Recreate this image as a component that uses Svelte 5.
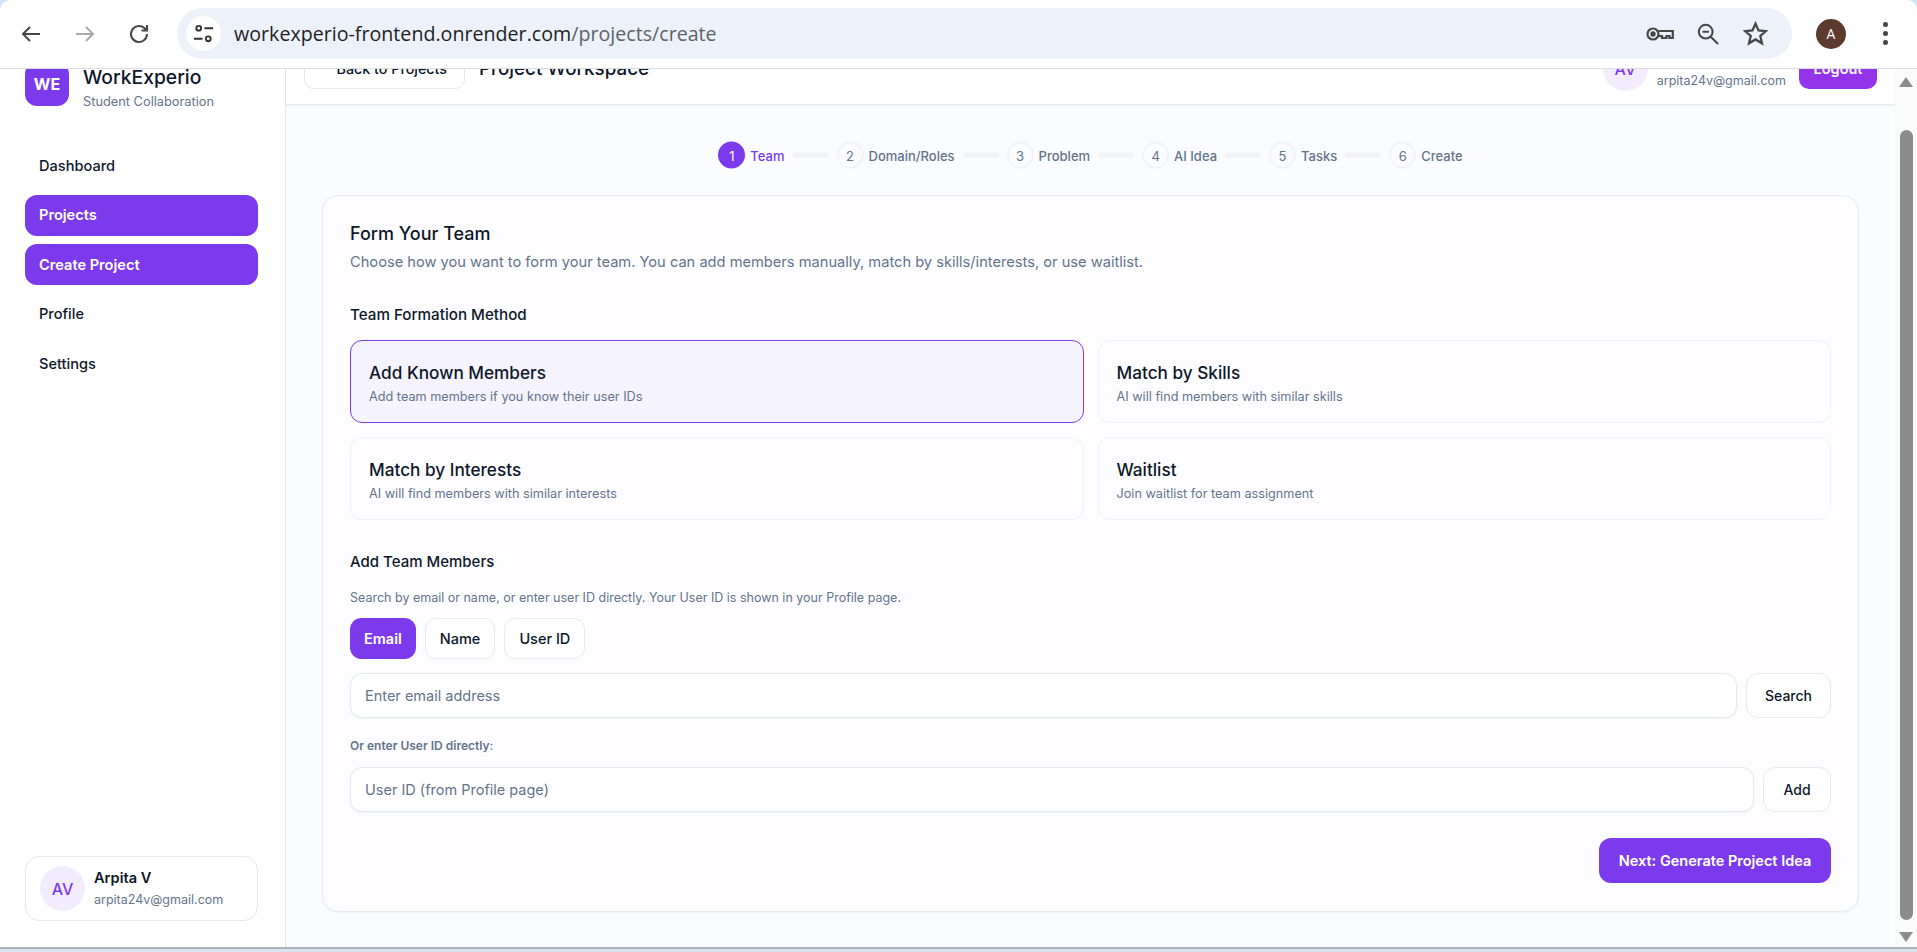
<script>
  const nav = [
    { label: 'Dashboard', active: false },
    { label: 'Projects', active: true },
    { label: 'Create Project', active: true },
    { label: 'Profile', active: false },
    { label: 'Settings', active: false }
  ];
  const steps = ['Team', 'Domain/Roles', 'Problem', 'AI Idea', 'Tasks', 'Create'];
  const methods = [
    { title: 'Add Known Members', sub: 'Add team members if you know their user IDs', active: true },
    { title: 'Match by Skills', sub: 'AI will find members with similar skills', active: false },
    { title: 'Match by Interests', sub: 'AI will find members with similar interests', active: false },
    { title: 'Waitlist', sub: 'Join waitlist for team assignment', active: false }
  ];
  const tabs = ['Email', 'Name', 'User ID'];
</script>

<div class="shell">
  <header class="chrome">
    <div class="navs">
      <svg class="ic" viewBox="0 0 24 24"><path d="M21 12H4M11 5l-7 7 7 7" /></svg>
      <svg class="ic off" viewBox="0 0 24 24"><path d="M3 12h17M13 5l7 7-7 7" /></svg>
      <svg class="ic" viewBox="0 0 24 24"><path d="M20 12a8 8 0 1 1-2.600-5.900L20 8.500M20 3v5.500h-5.500" /></svg>
    </div>
    <div class="omni">
      <span class="tune">
        <svg viewBox="0 0 24 24"><circle cx="7" cy="6.500" r="2.500" /><path d="M13 6.500h9M2 17.500h9" /><circle cx="17" cy="17.500" r="2.500" /></svg>
      </span>
      <span class="url">workexperio-frontend.onrender.com<span class="path">/projects/create</span></span>
      <div class="omni-icons">
        <svg class="key" viewBox="0 0 28 16"><circle cx="7" cy="8" r="5.500" /><circle cx="7" cy="8" r="1.600" class="solid" /><path d="M12.500 5h14.300v7h-3.300v-2h-3v2H16v-2h-3.500" /></svg>
        <svg class="zoom" viewBox="0 0 24 24"><circle cx="9.500" cy="9.500" r="7.500" /><path d="M6 9.500h7M15 15l8 8" /></svg>
        <svg class="star" viewBox="0 0 24 24"><path d="M12 2.500l2.900 6.500 7.100.7-5.400 4.700 1.600 7-6.200-3.700-6.200 3.700 1.600-7L2 9.700 9.100 9z" /></svg>
      </div>
    </div>
    <span class="acct">A</span>
    <span class="kebab"><i></i><i></i><i></i></span>
  </header>

  <div class="view">
    <div class="page">
      <aside class="sidebar">
        <div class="brand">
          <span class="logo">WE</span>
          <div class="brand-text">
            <strong>WorkExperio</strong>
            <span>Student Collaboration</span>
          </div>
        </div>
        <nav class="menu">
          {#each nav as item}
            <a class="item" class:active={item.active} href="#top">{item.label}</a>
          {/each}
        </nav>
        <div class="user">
          <span class="avatar">AV</span>
          <div class="who">
            <strong>Arpita V</strong>
            <span>arpita24v@gmail.com</span>
          </div>
        </div>
      </aside>

      <main class="main">
        <div class="topbar">
          <button class="back"><span class="arr">←</span>Back to Projects</button>
          <h1>Project Workspace</h1>
          <div class="top-right">
            <span class="avatar">AV</span>
            <div class="top-who">
              <strong>Arpita V</strong>
              <span>arpita24v@gmail.com</span>
            </div>
            <button class="logout">Logout</button>
          </div>
        </div>

        <div class="content">
          <ol class="stepper">
            {#each steps as s, i}
              {#if i > 0}<li class="bar" aria-hidden="true"></li>{/if}
              <li class="step" class:on={i === 0}>
                <span class="num">{i + 1}</span>
                <span class="lbl">{s}</span>
              </li>
            {/each}
          </ol>

          <section class="card">
            <h2>Form Your Team</h2>
            <p class="lead">Choose how you want to form your team. You can add members manually, match by skills/interests, or use waitlist.</p>

            <h3 class="method-h">Team Formation Method</h3>
            <div class="methods">
              {#each methods as m}
                <div class="method" class:sel={m.active}>
                  <strong>{m.title}</strong>
                  <span>{m.sub}</span>
                </div>
              {/each}
            </div>

            <h3 class="add-h">Add Team Members</h3>
            <p class="hint">Search by email or name, or enter user ID directly. Your User ID is shown in your Profile page.</p>
            <div class="tabs">
              {#each tabs as t, i}
                <button class="tab" class:cur={i === 0}>{t}</button>
              {/each}
            </div>
            <div class="row">
              <input class="field" placeholder="Enter email address" />
              <button class="ghost search">Search</button>
            </div>
            <div class="or">Or enter User ID directly:</div>
            <div class="row">
              <input class="field" placeholder="User ID (from Profile page)" />
              <button class="ghost add">Add</button>
            </div>
            <div class="foot">
              <button class="next">Next: Generate Project Idea</button>
            </div>
          </section>
        </div>
      </main>
    </div>

    <div class="scrollbar">
      <span class="up"></span>
      <span class="thumb"></span>
      <span class="down"></span>
    </div>
  </div>
  <div class="taskedge"></div>
</div>

<style>
  :global(body) {
    margin: 0;
    background: #fff;
  }
  * {
    box-sizing: border-box;
  }
  .shell {
    height: 952px;
    display: flex;
    flex-direction: column;
    overflow: hidden;
    font-family: Inter, 'Noto Sans', sans-serif;
    color: #0f172a;
    background: #d3e3fd;
  }

  /* browser chrome */
  .chrome {
    height: 69px;
    flex: none;
    display: flex;
    align-items: center;
    background: #fff;
    border-bottom: 1px solid #dcdee1;
    border-radius: 10px 10px 0 0;
    padding-bottom: 1px;
  }
  .navs {
    display: flex;
    align-items: center;
    gap: 30px;
    padding-left: 19px;
    width: 177px;
    flex: none;
  }
  .ic {
    width: 24px;
    height: 24px;
    fill: none;
    stroke: #474747;
    stroke-width: 2;
  }
  .ic.off {
    stroke: #a8a8a8;
  }
  .omni {
    width: 1615px;
    height: 51px;
    flex: none;
    border-radius: 26px;
    background: #ecf1fa;
    display: flex;
    align-items: center;
    padding-left: 9px;
  }
  .tune {
    width: 35px;
    height: 35px;
    border-radius: 50%;
    background: #fff;
    display: flex;
    align-items: center;
    justify-content: center;
    flex: none;
  }
  .tune svg {
    width: 23px;
    height: 23px;
    fill: none;
    stroke: #333;
    stroke-width: 2;
  }
  .url {
    margin-left: 13px;
    font-family: 'Open Sans', 'Noto Sans', sans-serif;
    font-size: 19.650px;
    color: #1f1f1f;
    white-space: nowrap;
  }
  .path {
    color: #5f6368;
  }
  .omni-icons {
    margin-left: auto;
    display: flex;
    align-items: center;
    gap: 23px;
    padding-right: 24px;
  }
  .omni-icons svg {
    fill: none;
    stroke: #474747;
    stroke-width: 2.200;
  }
  .key {
    width: 28px;
    height: 16px;
  }
  .key .solid {
    fill: #474747;
  }
  .zoom {
    width: 22px;
    height: 22px;
  }
  .star {
    width: 25px;
    height: 25px;
    margin-left: 1px;
  }
  .acct {
    margin-left: 24px;
    width: 30px;
    height: 30px;
    flex: none;
    border-radius: 50%;
    background: #5d3a2e;
    color: #fff;
    font-family: 'Open Sans', sans-serif;
    font-size: 14px;
    display: flex;
    align-items: center;
    justify-content: center;
  }
  .kebab {
    margin-left: 37px;
    display: flex;
    flex-direction: column;
    gap: 4.500px;
  }
  .kebab i {
    width: 4.500px;
    height: 4.500px;
    border-radius: 50%;
    background: #474747;
    display: block;
  }

  /* scrolled page */
  .view {
    flex: 1;
    min-height: 0;
    display: flex;
    overflow: hidden;
    background: #fbfcff;
  }
  .page {
    flex: 1;
    min-width: 0;
    height: calc(100% + 36px);
    margin-top: -36px;
    display: flex;
  }
  .sidebar {
    width: 286px;
    flex: none;
    background: #fff;
    border-right: 1px solid #e5e7eb;
    display: flex;
    flex-direction: column;
    padding: 29px 27px 26px 25px;
  }
  .brand {
    display: flex;
    align-items: center;
    gap: 14px;
    height: 44px;
  }
  .logo {
    width: 44px;
    height: 44px;
    flex: none;
    border-radius: 12px;
    background: #7c3aed;
    color: #fff;
    font-weight: 700;
    font-size: 16px;
    display: flex;
    align-items: center;
    justify-content: center;
  }
  .brand-text {
    display: flex;
    flex-direction: column;
    gap: 5px;
    margin-top: 7px;
  }
  .brand-text strong {
    font-size: 19.300px;
    font-weight: 500;
    line-height: 24px;
  }
  .brand-text span {
    font-size: 12.800px;
    color: #64748b;
    line-height: 16px;
  }
  .menu {
    margin-top: 39px;
    display: flex;
    flex-direction: column;
    gap: 8.600px;
  }
  .item {
    height: 41px;
    display: flex;
    align-items: center;
    padding-left: 14px;
    border-radius: 12px;
    font-size: 14.600px;
    font-weight: 500;
    color: #0f172a;
    text-decoration: none;
  }
  .item.active {
    background: #7c3aed;
    color: #fff;
    font-weight: 600;
  }
  .user {
    margin-top: auto;
    height: 65px;
    border: 1px solid #e5e7eb;
    border-radius: 14px;
    background: #fff;
    display: flex;
    align-items: center;
    gap: 9px;
    padding-left: 14px;
  }
  .avatar {
    width: 45px;
    height: 45px;
    flex: none;
    border-radius: 50%;
    background: #f3ecfd;
    color: #7c3aed;
    font-size: 16px;
    font-weight: 500;
    display: flex;
    align-items: center;
    justify-content: center;
  }
  .who {
    display: flex;
    flex-direction: column;
    gap: 3px;
    padding-top: 1px;
  }
  .who strong {
    font-size: 14.600px;
    font-weight: 600;
    line-height: 19px;
  }
  .who span {
    font-size: 12.500px;
    color: #64748b;
    line-height: 18px;
  }

  .main {
    flex: 1;
    min-width: 0;
    display: flex;
    flex-direction: column;
  }
  .topbar {
    height: 72px;
    flex: none;
    background: #fff;
    border-bottom: 1px solid #e5e7eb;
    box-shadow: 0 1px 3px rgba(15, 23, 42, 0.05);
    display: flex;
    align-items: center;
    padding: 0 18px 0 18px;
  }
  .back {
    height: 41px;
    width: 161px;
    border: 1px solid #e5e7eb;
    border-radius: 10px;
    background: #fff;
    font: 500 14.300px Inter, sans-serif;
    color: #0f172a;
    white-space: nowrap;
    padding: 0 0 0 0;
    display: flex;
    align-items: center;
    justify-content: center;
    gap: 4px;
  }
  .arr {
    font-size: 11px;
    transform: translateY(-5px);
  }
  h1 {
    margin: 0 0 0 14px;
    font-size: 18.800px;
    font-weight: 500;
    white-space: nowrap;
  }
  .top-right {
    margin-left: auto;
    display: flex;
    align-items: center;
    gap: 9px;
  }
  .top-who {
    display: flex;
    flex-direction: column;
    margin-top: 2px;
  }
  .top-who strong {
    font-size: 14.600px;
    line-height: 22px;
    font-weight: 600;
  }
  .top-who span {
    font-size: 12.500px;
    line-height: 18px;
    color: #64748b;
  }
  .logout {
    margin-left: 4px;
    width: 78px;
    height: 40px;
    border: 0;
    border-radius: 10px;
    background: #9333ea;
    color: #fff;
    font: 600 14.500px Inter, sans-serif;
  }

  .content {
    padding: 36px 36px 0;
  }
  .stepper {
    list-style: none;
    margin: 0;
    padding: 0;
    display: flex;
    justify-content: center;
    align-items: center;
    gap: 8px;
    height: 27px;
    transform: translateY(0.500px);
  }
  .bar {
    width: 36px;
    height: 5px;
    border-radius: 3px;
    background: #f1f3f8;
  }
  .step {
    display: flex;
    align-items: center;
    gap: 5px;
    font-size: 13px;
    font-weight: 500;
    color: #64748b;
    white-space: nowrap;
  }
  .num {
    width: 27px;
    height: 27px;
    border-radius: 50%;
    border: 2px solid #f1f3f8;
    display: flex;
    align-items: center;
    justify-content: center;
    font-weight: 400;
    font-size: 13px;
  }
  .step.on {
    color: #7c3aed;
  }
  .step.on .num {
    background: #7c3aed;
    border-color: #7c3aed;
    color: #fff;
  }

  .card {
    margin-top: 27px;
    height: 717px;
    border: 1px solid #e8eaf1;
    border-radius: 16px;
    background: #fdfdff;
    box-shadow: 0 1px 2px rgba(15, 23, 42, 0.04);
    padding: 26px 27px 27px;
  }
  h2 {
    margin: 0;
    font-size: 18px;
    line-height: 24px;
    font-weight: 500;
  }
  .lead {
    margin: 5px 0 0;
    font-size: 14.650px;
    line-height: 22px;
    color: #64748b;
  }
  .method-h {
    margin: 31px 0 0;
    font-size: 15.200px;
    line-height: 22px;
    font-weight: 500;
  }
  .methods {
    margin-top: 14px;
    display: grid;
    grid-template-columns: 1fr 1fr;
    gap: 14px;
  }
  .method {
    height: 83px;
    border: 1px solid #f0f1f6;
    border-radius: 12px;
    background: #fdfdff;
    padding: 20px 18px 0;
    display: flex;
    flex-direction: column;
  }
  .method strong {
    font-size: 17.200px;
    line-height: 24px;
    font-weight: 500;
  }
  .method span {
    font-size: 12.700px;
    line-height: 18px;
    margin-top: 3px;
    color: #64748b;
  }
  .method.sel {
    border-color: #7c3aed;
    background: #f5f3fd;
  }
  .add-h {
    margin: 31px 0 0;
    font-size: 15px;
    line-height: 22px;
    font-weight: 500;
  }
  .hint {
    margin: 16px 0 0;
    font-size: 12.500px;
    line-height: 18px;
    color: #64748b;
  }
  .tabs {
    margin-top: 11px;
    display: flex;
    gap: 9px;
  }
  .tab {
    height: 41px;
    padding: 0 14px;
    border: 1px solid #e8eaf1;
    border-radius: 11px;
    background: #fff;
    font: 500 14.500px Inter, sans-serif;
    color: #0f172a;
  }
  .tab.cur {
    background: #7c3aed;
    border-color: #7c3aed;
    color: #fff;
    font-weight: 600;
    padding: 0 13px;
  }
  .row {
    display: flex;
    gap: 9px;
  }
  .tabs + .row {
    margin-top: 14px;
  }
  .field {
    flex: 1;
    min-width: 0;
    height: 45px;
    border: 1px solid #e5e9f1;
    border-radius: 12px;
    background: #fff;
    box-shadow: 0 1px 2px rgba(15, 23, 42, 0.05);
    padding: 0 14px;
    font: 400 14.500px Inter, sans-serif;
    color: #0f172a;
    outline: none;
  }
  .field::placeholder {
    color: #64748b;
    opacity: 1;
  }
  .ghost {
    height: 45px;
    flex: none;
    border: 1px solid #e8eaf1;
    border-radius: 12px;
    background: #fff;
    font: 500 14px Inter, sans-serif;
    color: #0f172a;
    padding: 0;
  }
  .search {
    width: 85px;
  }
  .add {
    width: 68px;
  }
  .or {
    margin-top: 19px;
    font-size: 12px;
    line-height: 18px;
    font-weight: 600;
    color: #64748b;
  }
  .or + .row {
    margin-top: 12px;
  }
  .foot {
    margin-top: 26px;
    display: flex;
    justify-content: flex-end;
  }
  .next {
    width: 232px;
    height: 45px;
    border: 0;
    border-radius: 12px;
    background: #7c3aed;
    color: #fff;
    font: 600 14.500px Inter, sans-serif;
    padding: 0;
  }

  .scrollbar {
    width: 22px;
    flex: none;
    background: #fafafa;
    display: flex;
    flex-direction: column;
    align-items: center;
    padding: 8px 0 5px;
  }
  .up,
  .down {
    width: 0;
    height: 0;
    border-left: 7px solid transparent;
    border-right: 7px solid transparent;
    flex: none;
  }
  .up {
    border-bottom: 10px solid #8c8c8c;
  }
  .down {
    border-top: 10px solid #8c8c8c;
    margin-top: 12px;
  }
  .thumb {
    width: 13px;
    flex: 1;
    margin-top: 43px;
    border-radius: 7px;
    background: #8c8c8c;
  }
  .taskedge {
    height: 5px;
    flex: none;
    background: #d6e2ec;
    border-top: 2px solid #a9b3bb;
  }
</style>
